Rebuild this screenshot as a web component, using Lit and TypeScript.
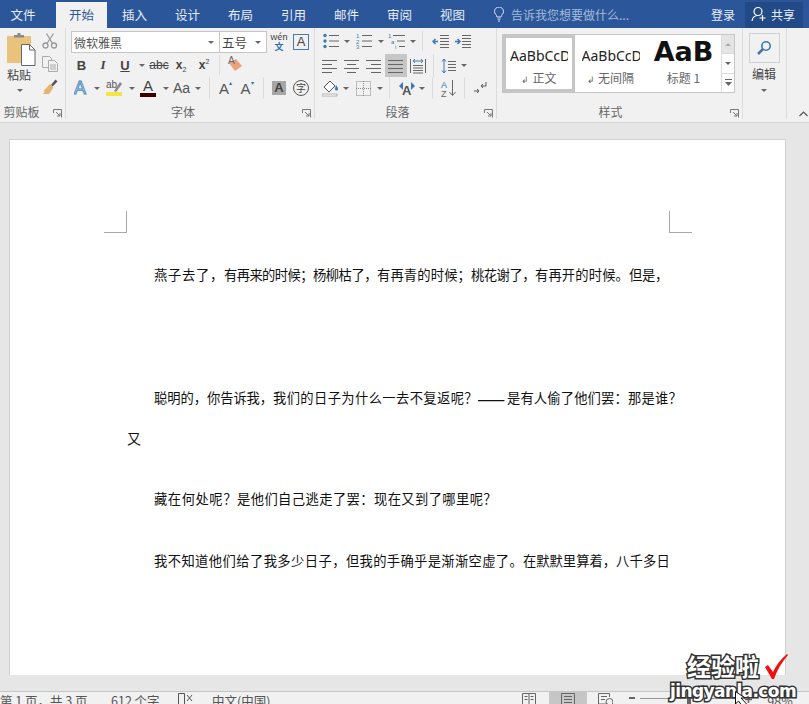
import { LitElement, html, svg, css } from "lit";
import { customElement } from "lit/decorators.js";

const cell = (w: number, c: unknown = "", cls = "") =>
  html`<div class="cell ${cls}" style="width:${w}px">${c}</div>`;
const caret = (w: number) => cell(w, html`<i class="caret"></i>`);
const sep = (w: number) => cell(w, html`<i class="vsep"></i>`);

const lines = (rows: [number, number][], y0 = 2, step = 4, color = "#666") =>
  html`<svg width="16" height="16" viewBox="0 0 16 16" fill="none" stroke="${color}" stroke-width="1">
    ${rows.map((r, i) => svg`<line x1=${r[0]} x2=${r[1]} y1=${y0 + i * step + 0.5} y2=${y0 + i * step + 0.5}></line>`)}
  </svg>`;

const launcher = html`<svg class="launch" width="9" height="9" viewBox="0 0 9 9" fill="none" stroke="#777"><path d="M.5 4V.5H8.500M8.500 .5V8.500M3 3l4 4M7 4v3H4"/></svg>`;

const FS = 13.3;
// Each line of the document: [text run, width of the run in px]
const DOC: Record<string, [string, number][]> = {
  p1: [["燕子去了，", 70], ["有再来的时候；", 89], ["杨柳枯了，", 64], ["有再青的时候；", 94], ["桃花谢了，", 64], ["有再开的时候。", 94], ["但是，", 39]],
  p2: [["聪明的，", 53], ["你告诉我，", 66], ["我们的日子为什么一去不复返呢？", 205], ["——", 29], ["是有人偷了他们罢：", 121], ["那是谁？", 54]],
  p3: [["藏在何处呢？", 83], ["是他们自己逃走了罢：", 137], ["现在又到了哪里呢？", 123]],
  p4: [["我不知道他们给了我多少日子，", 192], ["但我的手确乎是渐渐空虚了。", 177], ["在默默里算着，", 93], ["八千多日", 54]],
};
const docLine = (k: string) =>
  html`<div class="p ${k}">${DOC[k].map(([t, w]) => {
    const pitch = w / [...t].length;
    return t === "——"
      ? html`<span class="dash" style="width:${w}px">${t}</span>`
      : html`<span style="width:${w}px;letter-spacing:${(pitch - FS).toFixed(2)}px">${t}</span>`;
  })}</div>`;

@customElement("app-root")
export class AppRoot extends LitElement {
  static styles = css`
    :host { display:block; width:809px; height:704px; overflow:hidden; position:relative;
      font-family:"Noto Sans CJK SC","Noto Sans",sans-serif; color:#444; background:#e6e6e6; }
    * { box-sizing:border-box; }
    .title { height:28px; background:#2b579a; display:flex; align-items:flex-end; color:#fff; font-size:12.5px; }
    .title > * { flex:none; }
    .tab { width:53px; height:26px; display:flex; align-items:center; justify-content:center; color:#e8eef7; padding-bottom:2px; }
    .tab.file { width:46px; margin-right:9px; }
    .tab.active { background:#f1f1f1; color:#2b579a; width:51px; margin:0 1px; }
    .tell { margin-left:15px; height:26px; display:flex; align-items:center; gap:7px; color:#a5bbd9; font-size:12px; width:217px; padding-bottom:2px; }
    .login { width:24px; height:26px; display:flex; align-items:center; font-size:12px; white-space:nowrap; color:#e8eef7; padding-bottom:2px; }
    .share { margin-left:10px; width:58px; height:26px; background:#214a86; display:flex; align-items:center; gap:3px; padding-left:6px; font-size:12px; white-space:nowrap; padding-bottom:2px; color:#e8eef7; }

    .ribbon { height:95px; background:#f1f1f1; border-bottom:1px solid #d4d4d4; display:flex; }
    .g { display:flex; flex-direction:column; position:relative; border-right:1px solid #dcdcdc; margin-bottom:3px; flex:none; }
    .g .body { flex:1; min-height:0; }
    .g .label { height:18px; font-size:12px; display:flex; align-items:center; justify-content:center; color:#666; margin-bottom:-1px; }
    .launch { position:absolute; right:3px; bottom:1px; }
    .clip { width:66px; }
    .clip .label { padding-right:22px; }
    .font { width:249px; }
    .font .label { padding-right:14px; }
    .para { width:182px; }
    .para .label { padding-right:16px; }
    .styles { width:246px; }
    .styles .label { padding-right:18px; }
    .edit { width:44px; }
    .rest { flex:1; display:flex; align-items:flex-end; justify-content:flex-end; padding:0 1px 5px 0; }

    .row { display:flex; align-items:center; }
    .cell { display:flex; align-items:center; justify-content:center; flex:none; height:100%; font-size:12px; }
    .caret { width:0; height:0; border:3px solid transparent; border-top:3.5px solid #666; border-bottom:0; display:block; }
    .caret.up { transform:rotate(180deg); opacity:.45; }
    .vsep { width:1px; height:100%; background:#dcdcdc; display:block; }

    .clip .body { display:flex; padding:5px 0 0 7px; }
    .paste { width:32px; display:flex; flex-direction:column; align-items:flex-start; }
    .paste span { font-size:12px; line-height:14px; margin-top:2px; color:#444; width:24px; }
    .paste .caret { margin:7px 0 0 10px; }
    .tools { margin-left:3px; display:flex; flex-direction:column; gap:7px; }

    .font .body { padding:3px 0 0 5px; display:flex; flex-direction:column; }
    .r1 { height:22px; margin-bottom:2px; }
    .r2 { height:20px; margin-bottom:2px; }
    .r3 { height:22px; }
    .combo { height:22px; background:#fff; border:1px solid #c6c6c6; display:flex; align-items:center; justify-content:space-between; padding:0 5px 0 2px; font-size:12px; color:#555; flex:none; }
    .combo.name { width:149px; }
    .combo.size { width:47px; border-left:0; color:#444; font-size:12.5px; }
    .b { font:bold 13px "Liberation Sans",sans-serif; color:#444; }
    .it { font:italic bold 13px "Liberation Serif",serif; color:#444; }
    .u { font:bold 13px "Liberation Sans",sans-serif; text-decoration:underline; color:#444; }
    .abc { font:12px "Liberation Sans",sans-serif; text-decoration:line-through; color:#444; }
    .x { font:bold 12px "Liberation Sans",sans-serif; color:#444; }
    .x sub,.x sup { font-size:7px; font-weight:normal; line-height:0; }
    .wen { display:flex; flex-direction:column; align-items:center; font-size:9px; line-height:10px; color:#444; }
    .wen b { color:#2f6fb0; font-weight:bold; font-size:9px; }
    .boxa { width:16px; height:16px; border:1px solid #4a7bb0; font:13px/14px "Liberation Sans",sans-serif; text-align:center; color:#444; }
    .aa { font:14px "Liberation Sans",sans-serif; color:#555; }
    .bigA { font:15px "Liberation Sans",sans-serif; color:#555; display:flex; }
    .bigA small { font-size:6px; color:#2f6fb0; line-height:6px; }
    .grayA { width:14px; height:14px; background:#a6a6a6; font:bold 13px/14px "Liberation Sans",sans-serif; color:#444; text-align:center; }
    .circle { width:16px; height:16px; border:1px solid #555; border-radius:50%; font-size:10px; line-height:13px; text-align:center; color:#444; }
    .colorA { display:flex; flex-direction:column; align-items:center; font:15px/14px "Liberation Sans",sans-serif; color:#444; }
    .colorA i { display:block; width:16px; height:4px; background:#3a0000; }

    .para .body { padding:3px 0 0 4px; display:flex; flex-direction:column; }
    .pr1 { height:20px; margin-bottom:3px; }
    .pr2 { height:23px; }
    .pr3 { height:22px; }
    .sel { background:#c6c6c6; }

    .styles .body { padding:6px 0 0 5px; }
    .gallery { width:233px; height:59px; border:1px solid #c6c6c6; background:#fff; display:flex; }
    .st { height:57px; display:flex; flex-direction:column; align-items:center; overflow:hidden; flex:none; font-family:"Noto Sans","Noto Sans CJK SC",sans-serif; }
    .st.a { width:72px; border:3px solid #c6c6c6; padding-top:8px; }
    .st.b2 { width:77px; padding:11px 6px 0 0; }
    .st.c { width:69px; padding:0 6px 0 0; }
    .st .s { font-size:14px; line-height:20px; color:#222; width:58px; overflow:hidden; white-space:nowrap; }
    .st .big { font:bold 27px/34px "DejaVu Sans",sans-serif; color:#111; }
    .st .n { font:12px/16px "Noto Sans CJK SC",sans-serif; color:#666; margin-top:4px; white-space:nowrap; }
    .st .big + .n { margin-top:1px; }
    .st .n em { font-style:normal; font-size:9px; margin-right:3px; }
    .scr { width:14px; display:flex; flex-direction:column; border-left:1px solid #dcdcdc; margin-left:auto; }
    .scr div { flex:1; display:flex; align-items:center; justify-content:center; border-bottom:1px solid #dcdcdc; }
    .scr div:last-child { border-bottom:0; }
    .scr .up { background:#e4e4e4; }
    .edit .body { padding:5px 0 0 5px; display:flex; flex-direction:column; align-items:center; width:37px; }
    .find { width:31px; height:30px; border:1px solid #d0d0d0; display:flex; align-items:center; justify-content:center; }
    .edit span { font-size:12px; line-height:14px; margin-top:4px; color:#444; }
    .edit .caret { margin-top:8px; }

    .main { height:569px; padding:16px 23px 0 9px; background:#e6e6e6; border-bottom:1px solid #c6c6c6; }
    .page { height:536px; background:#fff; border:1px solid #d0d0d0; border-bottom:0; color:#111; padding:71px 93px 0 94px; display:flex; flex-direction:column; }
    .marks { display:flex; justify-content:space-between; height:22px; flex:none; }
    .mark { width:23px; height:22px; border-bottom:1px solid #a8a8a8; }
    .mark.l { border-right:1px solid #a8a8a8; }
    .mark.r { border-left:1px solid #a8a8a8; }
    .p { font-size:13.3px; line-height:20px; white-space:nowrap; margin-left:50px; flex:none; display:flex; }
    .p span { flex:none; display:block; }
    .p span.dash { font-size:18px; text-indent:-3px; overflow:hidden; }
    .p1 { margin-top:32px; }
    .p2 { margin-top:103px; }
    .you { font-size:14px; line-height:20px; margin:20px 0 0 23px; flex:none; }
    .p3 { margin-top:41px; }
    .p4 { margin-top:42px; }

    .status { height:12px; background:#f1f1f1; display:flex; font-size:12.5px; line-height:18px; color:#555; overflow:hidden; align-items:flex-start; }
    .status .sp { white-space:nowrap; flex:none; }
    .status .cell { height:12px; align-items:flex-start; font-size:12.5px; }
    .status .left { justify-content:flex-start; }
    .track { position:relative; width:95px; height:12px; flex:none; }
    .track i { position:absolute; left:0; right:0; top:6px; height:1px; background:#999; }
    .track b { position:absolute; left:47px; top:1px; width:4px; height:11px; background:#666; }

    .wm { position:absolute; left:668px; top:651px; width:130px; pointer-events:none; display:flex; flex-direction:column; }
    .wm .top { display:flex; align-items:center; padding-left:19px; gap:5px; height:30px; }
    .wm .cn { font:bold 24px/30px "Noto Sans CJK SC",sans-serif; color:#fff; -webkit-text-stroke:3px #333; paint-order:stroke fill; white-space:nowrap; }
    .wm .en { font:bold 17px/21px "DejaVu Sans",sans-serif; color:#fff; -webkit-text-stroke:3px #333; paint-order:stroke fill; white-space:nowrap; letter-spacing:-.6px; padding-left:2px; }
    .cursor { position:absolute; left:735px; top:691px; }
  `;

  render() {
    const bl = "#3c78b4";
    return html`
      <div class="title">
        <div class="tab file">文件</div><div class="tab active">开始</div>
        ${["插入", "设计", "布局", "引用", "邮件", "审阅", "视图"].map((t) => html`<div class="tab">${t}</div>`)}
        <div class="tell">
          <svg width="10" height="15" viewBox="0 0 10 15" fill="none" stroke="#dfe7f2"><path d="M3 10c0-2-2.500-3-2.500-5.500a4.500 4.500 0 0 1 9 0C9.500 7 7 8 7 10ZM3.500 12h3M4 14h2"/></svg>
          告诉我您想要做什么...
        </div>
        <div class="login">登录</div>
        <div class="share">
          <svg width="17" height="17" viewBox="0 0 17 17" fill="none" stroke="#fff" stroke-width="1.200"><circle cx="7" cy="5.500" r="4"/><path d="M1 15c.5-4 3-5.500 6-5.500M11.500 9v6M8.500 12h6"/></svg>
          共享
        </div>
      </div>

      <div class="ribbon">
        <div class="g clip">
          <div class="body">
            <div class="paste">
              <svg width="29" height="33" viewBox="0 0 29 33">
                <rect x="0" y="3" width="24" height="27" rx="1" fill="#e9c27c"/>
                <path d="M7 4V2h3.500V0h3v2H17v2.500H7Z" fill="#8a8a8a"/>
                <path d="M14.500 11.500h8l5.500 5.500v15.500H14.500Z" fill="#fff" stroke="#666"/>
                <path d="M22.500 11.500V17H28" fill="none" stroke="#666"/>
              </svg>
              <span>粘贴</span>
              <i class="caret"></i>
            </div>
            <div class="tools">
              <svg width="16" height="16" viewBox="0 0 16 16" fill="none" stroke="#999" stroke-width="1.300"><circle cx="3.500" cy="12.500" r="2.500"/><circle cx="12" cy="12.500" r="2.500"/><path d="M5 10.500 11.500 .5M10.500 10.500 4.500 .5"/></svg>
              <svg width="16" height="16" viewBox="0 0 16 16" fill="#f1f1f1" stroke="#aaa"><path d="M.5 .5h7l2 2v9H.5Z"/><path d="M6.500 4.500h6l3 3v8h-9Z"/><path d="M8 9h6M8 11h6M8 13h6" /></svg>
              <svg width="16" height="16" viewBox="0 0 16 16"><path d="M9 6 13.500 .5 15.500 2.500 10.500 7.500Z" fill="#555"/><path d="M8 5 11.500 8.500 7 15H1L3 12 1 12.500Z" fill="#e4b36f"/></svg>
            </div>
          </div>
          <div class="label">剪贴板</div>${launcher}
        </div>

        <div class="g font">
          <div class="body">
            <div class="row r1">
              <div class="combo name"><span>微软雅黑</span><i class="caret"></i></div>
              <div class="combo size"><span>五号</span><i class="caret"></i></div>
              ${cell(24, html`<div class="wen">wén<b>文</b></div>`)}
              ${cell(20, html`<div class="boxa">A</div>`)}
            </div>
            <div class="row r2">
              ${cell(21, html`<span class="b">B</span>`)}
              ${cell(22, html`<span class="it">I</span>`)}
              ${cell(22, html`<span class="u">U</span>`)}
              ${caret(12)}
              ${cell(22, html`<span class="abc">abc</span>`)}
              ${cell(22, html`<span class="x">x<sub>2</sub></span>`)}
              ${cell(24, html`<span class="x">x<sup>2</sup></span>`)}
              ${sep(6)}
              ${cell(26, html`<svg width="16" height="18" viewBox="0 0 16 18"><path d="M2 7 9 3 15 10 8 15Z" fill="#eaa27f"/><text x="1" y="8" font-size="10" font-family="Liberation Sans" fill="#666">A</text></svg>`)}
            </div>
            <div class="row r3">
              ${cell(22, html`<svg width="16" height="18" viewBox="0 0 16 18"><text x="0" y="15" font-size="18" font-family="Liberation Sans" fill="#dbe8f5" stroke="#4a86c0" stroke-width=".9">A</text></svg>`)}
              ${caret(8)}
              ${cell(26, html`<svg width="17" height="18" viewBox="0 0 17 18"><rect x="0" y="13" width="16" height="4" fill="#f5e342"/><text x="0" y="9" font-size="10" font-family="Liberation Sans" fill="#555" >ab</text><path d="M8 12 14 3 16 5 10 13Z" fill="#888"/></svg>`)}
              ${caret(9)}
              ${cell(24, html`<div class="colorA">A<i></i></div>`)}
              ${caret(11)}
              ${cell(21, html`<span class="aa">Aa</span>`)}
              ${caret(11)}
              ${sep(12)}
              ${cell(21, html`<span class="bigA">A<small>▴</small></span>`)}
              ${cell(22, html`<span class="bigA">A<small>▾</small></span>`)}
              ${sep(10)}
              ${cell(22, html`<div class="grayA">A</div>`)}
              ${cell(22, html`<div class="circle">字</div>`)}
            </div>
          </div>
          <div class="label">字体</div>${launcher}
        </div>

        <div class="g para">
          <div class="body">
            <div class="row pr1">
              ${cell(24, html`<svg width="16" height="16" viewBox="0 0 16 16"><circle cx="2" cy="2.500" r="1.700" fill="${bl}"/><circle cx="2" cy="8" r="1.700" fill="${bl}"/><circle cx="2" cy="13.500" r="1.700" fill="${bl}"/><path d="M6 2.500h10M6 8h10M6 13.500h10" stroke="#666"/></svg>`)}
              ${caret(7)}
              ${cell(28, html`<svg width="16" height="16" viewBox="0 0 16 16"><g font-size="6" font-family="Liberation Sans" fill="${bl}"><text x="0" y="5">1</text><text x="0" y="10.500">2</text><text x="0" y="16">3</text></g><path d="M6 2.500h10M6 8h10M6 13.500h10" stroke="#666"/></svg>`)}
              ${caret(6)}
              ${cell(25, html`<svg width="18" height="16" viewBox="0 0 18 16"><g font-size="6" font-family="Liberation Sans" fill="${bl}"><text x="0" y="5">1</text><text x="3" y="10.500">a</text><text x="7" y="16">i</text></g><path d="M5 2.500h12M9 8h8M11 13.500h6" stroke="#666"/></svg>`)}
              ${caret(7)}
              ${sep(13)}
              ${cell(22, html`<svg width="17" height="14" viewBox="0 0 17 14"><path d="M8 1.500h9M8 4.500h9M8 7.500h9M8 10.500h9M8 13.500h9" stroke="#666"/><path d="M6 7.500H1M3.500 5 1 7.500 3.500 10" stroke="${bl}" stroke-width="1.500" fill="none"/></svg>`)}
              ${cell(22, html`<svg width="17" height="14" viewBox="0 0 17 14"><path d="M8 1.500h9M8 4.500h9M8 7.500h9M8 10.500h9M8 13.500h9" stroke="#666"/><path d="M1 7.500h5M3.500 5 6 7.500 3.500 10" stroke="${bl}" stroke-width="1.500" fill="none"/></svg>`)}
            </div>
            <div class="row pr2">
              ${cell(22, lines([[0, 15], [0, 10], [0, 15], [0, 10]]))}
              ${cell(22, lines([[0, 15], [3, 12], [0, 15], [3, 12]]))}
              ${cell(22, lines([[0, 15], [5, 15], [0, 15], [5, 15]]))}
              ${cell(22, lines([[0, 15], [0, 15], [0, 15], [0, 15]]), "sel")}
              ${cell(22, html`<svg width="16" height="16" viewBox="0 0 16 16" fill="none"><path d="M.5 1v14M15.500 1v14" stroke="#666"/><path d="M3 3h10M5 1 3 3l2 2M11 1l2 2-2 2" stroke="${bl}"/><path d="M3 7.500h10M3 10h10M3 12.500h10M3 15h10" stroke="#666"/></svg>`)}
              ${sep(8)}
              ${cell(23, html`<svg width="15" height="16" viewBox="0 0 15 16" fill="none"><path d="M7 3.500h8M7 6.500h8M7 9.500h8M7 12.500h8" stroke="#666"/><path d="M3 1v14M1 3.500 3 1l2 2.500M1 12.500 3 15l2-2.500" stroke="${bl}"/></svg>`)}
              ${caret(7)}
            </div>
            <div class="row pr3">
              ${cell(23, html`<svg width="17" height="18" viewBox="0 0 17 18" fill="none"><path d="M2 8 8 2 13 7 7 13Z" stroke="#555" fill="#fff"/><path d="M14 6c1.500 2 2 3 2 4a1.500 1.500 0 0 1-3 0c0-1 .5-2 1-4Z" fill="${bl}"/><rect x="0" y="15" width="15" height="2" fill="#fff" stroke="#888" stroke-width=".6"/></svg>`)}
              ${caret(8)}
              ${cell(26, html`<svg width="15" height="15" viewBox="0 0 15 15" fill="none" stroke="#888" stroke-dasharray="1 1"><rect x=".5" y=".5" width="14" height="14"/><path d="M7.500 0v15M0 7.500h15"/></svg>`)}
              ${caret(8)}
              ${sep(11)}
              ${cell(23, html`<svg width="18" height="16" viewBox="0 0 18 16"><text x="4" y="15" font-size="13" font-weight="bold" font-family="Liberation Sans" fill="#555">A</text><path d="M1 6 5 2 5 10ZM17 6 13 2 13 10Z" fill="${bl}"/></svg>`)}
              ${caret(8)}
              ${sep(12)}
              ${cell(22, html`<svg width="16" height="17" viewBox="0 0 16 17"><text x="0" y="8" font-size="9" font-family="Liberation Sans" fill="${bl}">A</text><text x="0" y="17" font-size="9" font-family="Liberation Sans" fill="#666">Z</text><path d="M11.500 0v15M8.500 12l3 3.500 3-3.500" stroke="#666" fill="none"/></svg>`)}
              ${sep(9)}
              ${cell(22, html`<svg width="14" height="14" viewBox="0 0 14 14" fill="none" stroke="#555"><path d="M13 1v4H8M10 3 8 5l2 2M1 10h5M4 8l2 2-2 2"/></svg>`)}
            </div>
          </div>
          <div class="label">段落</div>${launcher}
        </div>

        <div class="g styles">
          <div class="body">
            <div class="gallery">
              <div class="st a"><div class="s">AaBbCcDd</div><div class="n"><em>↲</em>正文</div></div>
              <div class="st b2"><div class="s">AaBbCcDd</div><div class="n"><em>↲</em>无间隔</div></div>
              <div class="st c"><div class="big">AaB</div><div class="n">标题 1</div></div>
              <div class="scr">
                <div class="up"><i class="caret up"></i></div>
                <div><i class="caret"></i></div>
                <div><svg width="7" height="7" viewBox="0 0 7 7"><path d="M0 .5h7" stroke="#666"/><path d="M0 3h7L3.500 7Z" fill="#666"/></svg></div>
              </div>
            </div>
          </div>
          <div class="label">样式</div>${launcher}
        </div>

        <div class="g edit">
          <div class="body">
            <div class="find"><svg width="16" height="16" viewBox="0 0 16 16" fill="none" stroke="#3c78b4"><circle cx="10" cy="6" r="4.200" stroke-width="1.600"/><path d="M7 9 2 14" stroke-width="2.500"/></svg></div>
            <span>编辑</span>
            <i class="caret"></i>
          </div>
        </div>
        <div class="rest"><svg width="9" height="6" viewBox="0 0 9 6" fill="none" stroke="#555" stroke-width="1.200"><path d="M.5 5 4.500 1l4 4"/></svg></div>
      </div>

      <div class="main">
        <div class="page">
          <div class="marks"><div class="mark l"></div><div class="mark r"></div></div>
          ${docLine("p1")}
          ${docLine("p2")}
          <div class="you">又</div>
          ${docLine("p3")}
          ${docLine("p4")}
        </div>
      </div>

      <div class="status">
        ${cell(111, html`<span class="sp">第 1 页，共 3 页</span>`, "left")}
        ${cell(67, html`<span class="sp">612 个字</span>`, "left")}
        ${cell(34, html`<svg width="16" height="12" viewBox="0 0 16 12" fill="none" stroke="#555"><path d="M.5 12V1.500h6V12M9 3l5 6M14 3 9 9"/></svg>`, "left")}
        ${cell(310, html`<span class="sp">中文(中国)</span>`, "left")}
        ${cell(27, html`<svg width="14" height="12" viewBox="0 0 14 12" fill="none" stroke="#666"><path d="M.5 12V1.500h13V12M7 1v11M2.500 4.500h3M2.500 7.500h3M8.500 4.500h3M8.500 7.500h3"/></svg>`, "left")}
        ${cell(38, html`<svg width="14" height="12" viewBox="0 0 14 12" fill="none" stroke="#666"><path d="M.5 12V1.500h13V12M3 4.500h8M3 7.500h8M3 10.500h8"/></svg>`, "sel")}
        ${cell(36, html`<svg width="15" height="12" viewBox="0 0 15 12" fill="none" stroke="#666"><path d="M10 12H.5V1.500h11V5M3 4.500h6M3 7.500h4"/><circle cx="11.500" cy="10" r="3.500"/></svg>`)}
        ${cell(17, html`<svg width="6" height="12" viewBox="0 0 6 12"><path d="M0 6h6" stroke="#666" stroke-width="2"/></svg>`)}
        <div class="track"><i></i><b></b></div>
        ${cell(26, html`<svg width="7" height="12" viewBox="0 0 7 12"><path d="M0 7.500h7M3.500 4v7" stroke="#666" stroke-width="1.500"/></svg>`)}
        ${cell(38, html`<span class="sp">98%</span>`)}
      </div>

      <div class="wm">
        <div class="top">
          <span class="cn">经验啦</span>
          <svg width="24" height="25" viewBox="0 0 24 25"><path d="M1 13 4 11 9 18C12 11 17 5 23 0L24 1C18 8 13 16 10 25H8Z" fill="#f01010"/></svg>
        </div>
        <div class="en">jingyanla.com</div>
      </div>
      <svg class="cursor" width="16" height="14" viewBox="0 0 16 14"><path d="M.5 .5V13l3-3 3 4h6L6 7h4Z" fill="#fff" stroke="#111"/></svg>
    `;
  }
}
